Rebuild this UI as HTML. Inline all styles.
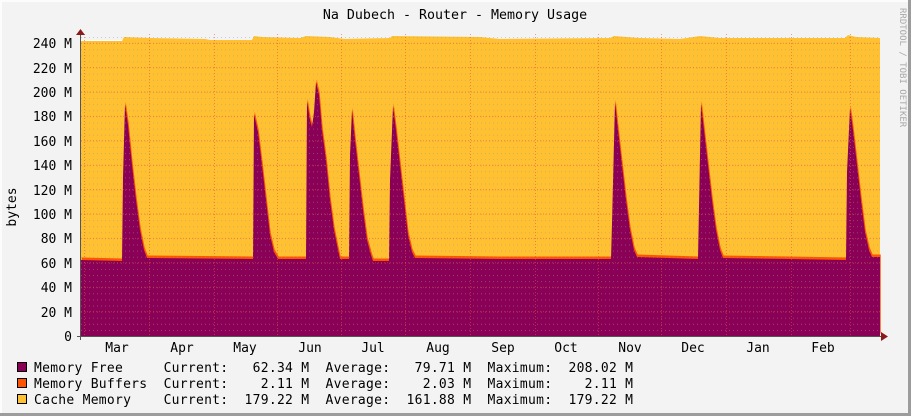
<!DOCTYPE html>
<html><head><meta charset="utf-8"><style>
html,body{margin:0;padding:0;background:#f3f3f3;}
svg{display:block;}
text{font-family:"DejaVu Sans Mono","Liberation Mono",monospace;fill:#000;}
</style></head><body>
<svg width="911" height="416" viewBox="0 0 911 416" xmlns="http://www.w3.org/2000/svg">
<defs>
<pattern id="minor" x="0" y="0" width="4" height="6.1" patternUnits="userSpaceOnUse" patternTransform="translate(81,336)">
<rect x="0" y="0" width="1" height="1" fill="rgba(150,150,150,0.45)"/>
</pattern>
</defs>
<rect x="0" y="0" width="911" height="416" fill="#f3f3f3"/>
<rect x="0" y="0" width="2" height="416" fill="#fcfcfc"/>
<rect x="0" y="0" width="911" height="2" fill="#fcfcfc"/>
<rect x="908" y="0" width="3" height="416" fill="#9c9c9c"/>
<rect x="0" y="413" width="911" height="3" fill="#9c9c9c"/>
<text x="455" y="19" text-anchor="middle" style="font-size:13.3px">Na Dubech - Router - Memory Usage</text>
<text x="0" y="0" transform="translate(900,8) rotate(90)" style="font-size:9px;fill:#a8a8a8">RRDTOOL / TOBI OETIKER</text>
<text x="0" y="0" transform="translate(16,207) rotate(-90)" text-anchor="middle" style="font-size:13px">bytes</text>
<rect x="81" y="40" width="799" height="296" fill="#fff"/>
<path d="M81,336 L81,41 L122,41 L124,37 L150,38 L205,39 L210,40 L252,40 L254,36 L262,37 L300,38 L306,36 L330,37 L345,39 L390,38 L392,36 L480,37 L500,39 L610,38 L614,36 L640,38 L680,39 L700,36 L720,38 L760,38 L800,38 L845,38 L848,35 L856,37 L880,38 L880,336 Z" fill="#ffc132"/>
<path d="M81,336 L81,260 L122,261 L123,178 L125,104 L128,125 L132,165 L136,200 L140,230 L144,250 L147,258 L150,258 L253,259 L254,114 L258,132 L262,165 L266,200 L270,235 L274,252 L278,259 L306,259 L307,101 L310,120 L312,127 L314,112 L316,82 L319,95 L322,130 L326,160 L330,200 L334,230 L338,250 L340,259 L349,259 L350,155 L352,110 L355,140 L359,175 L363,210 L367,240 L371,255 L373,261 L389,261 L390,180 L393,106 L396,130 L400,165 L404,200 L408,235 L412,252 L415,258 L500,259 L560,259 L611,259 L612,223 L615,102 L618,130 L622,165 L626,200 L630,230 L634,250 L637,257 L698,259 L699,207 L701,103 L704,130 L708,165 L712,200 L716,230 L720,250 L723,258 L790,259 L846,260 L847,172 L850,108 L853,130 L857,165 L861,200 L865,232 L869,250 L872,257 L880,257 L880,336 Z" fill="#ff5300" transform="translate(0.7,-2.5)"/>
<path d="M81,336 L81,260 L122,261 L123,178 L125,104 L128,125 L132,165 L136,200 L140,230 L144,250 L147,258 L150,258 L253,259 L254,114 L258,132 L262,165 L266,200 L270,235 L274,252 L278,259 L306,259 L307,101 L310,120 L312,127 L314,112 L316,82 L319,95 L322,130 L326,160 L330,200 L334,230 L338,250 L340,259 L349,259 L350,155 L352,110 L355,140 L359,175 L363,210 L367,240 L371,255 L373,261 L389,261 L390,180 L393,106 L396,130 L400,165 L404,200 L408,235 L412,252 L415,258 L500,259 L560,259 L611,259 L612,223 L615,102 L618,130 L622,165 L626,200 L630,230 L634,250 L637,257 L698,259 L699,207 L701,103 L704,130 L708,165 L712,200 L716,230 L720,250 L723,258 L790,259 L846,260 L847,172 L850,108 L853,130 L857,165 L861,200 L865,232 L869,250 L872,257 L880,257 L880,336 Z" fill="#8b0057"/>
<rect x="81" y="37" width="799" height="299" fill="url(#minor)"/>
<g stroke="rgba(230,80,60,0.55)" stroke-width="1" stroke-dasharray="1,2">
<line x1="81" x2="880" y1="311.6" y2="311.6"/><line x1="81" x2="880" y1="287.2" y2="287.2"/>
<line x1="81" x2="880" y1="262.8" y2="262.8"/><line x1="81" x2="880" y1="238.4" y2="238.4"/>
<line x1="81" x2="880" y1="214" y2="214"/><line x1="81" x2="880" y1="189.6" y2="189.6"/>
<line x1="81" x2="880" y1="165.2" y2="165.2"/><line x1="81" x2="880" y1="140.8" y2="140.8"/>
<line x1="81" x2="880" y1="116.4" y2="116.4"/><line x1="81" x2="880" y1="92" y2="92"/>
<line x1="81" x2="880" y1="67.6" y2="67.6"/><line x1="81" x2="880" y1="43.2" y2="43.2"/>
<line x1="84.5" x2="84.5" y1="34" y2="336"/><line x1="149.5" x2="149.5" y1="34" y2="336"/>
<line x1="214.5" x2="214.5" y1="34" y2="336"/><line x1="277.5" x2="277.5" y1="34" y2="336"/>
<line x1="341.5" x2="341.5" y1="34" y2="336"/><line x1="405.5" x2="405.5" y1="34" y2="336"/>
<line x1="470.5" x2="470.5" y1="34" y2="336"/><line x1="535.5" x2="535.5" y1="34" y2="336"/>
<line x1="598.5" x2="598.5" y1="34" y2="336"/><line x1="661.5" x2="661.5" y1="34" y2="336"/>
<line x1="726.5" x2="726.5" y1="34" y2="336"/><line x1="791.5" x2="791.5" y1="34" y2="336"/>
<line x1="850.5" x2="850.5" y1="34" y2="336"/>
</g>
<line x1="80.5" y1="34" x2="80.5" y2="340" stroke="#555"/>
<line x1="77" y1="336.5" x2="882" y2="336.5" stroke="#555"/>
<path d="M76,35 L80.5,29 L85,35 Z" fill="#8b1a1a"/>
<path d="M881,332 L888,336.5 L881,341 Z" fill="#8b1a1a"/>
<g text-anchor="end" style="font-size:13px">
<text x="72" y="341">0</text><text x="72" y="317">20 M</text><text x="72" y="292">40 M</text>
<text x="72" y="268">60 M</text><text x="72" y="243">80 M</text><text x="72" y="219">100 M</text>
<text x="72" y="195">120 M</text><text x="72" y="170">140 M</text><text x="72" y="146">160 M</text>
<text x="72" y="121">180 M</text><text x="72" y="97">200 M</text><text x="72" y="73">220 M</text>
<text x="72" y="48">240 M</text>
</g>
<g text-anchor="middle" style="font-size:13px">
<text x="117" y="352">Mar</text><text x="182" y="352">Apr</text><text x="245" y="352">May</text>
<text x="310" y="352">Jun</text><text x="373" y="352">Jul</text><text x="438" y="352">Aug</text>
<text x="503" y="352">Sep</text><text x="566" y="352">Oct</text><text x="630" y="352">Nov</text>
<text x="693" y="352">Dec</text><text x="758" y="352">Jan</text><text x="823" y="352">Feb</text>
</g>
<rect x="17.5" y="362.5" width="9" height="9" fill="#8b0057" stroke="#000"/>
<rect x="17.5" y="378.5" width="9" height="9" fill="#ff5300" stroke="#000"/>
<rect x="17.5" y="394.5" width="9" height="9" fill="#ffc132" stroke="#000"/>
<g style="font-size:13px">
<text x="34" y="372" xml:space="preserve" textLength="599" lengthAdjust="spacing">Memory Free     Current:   62.34 M  Average:   79.71 M  Maximum:  208.02 M</text>
<text x="34" y="388" xml:space="preserve" textLength="599" lengthAdjust="spacing">Memory Buffers  Current:    2.11 M  Average:    2.03 M  Maximum:    2.11 M</text>
<text x="34" y="404" xml:space="preserve" textLength="599" lengthAdjust="spacing">Cache Memory    Current:  179.22 M  Average:  161.88 M  Maximum:  179.22 M</text>
</g>
</svg>
</body></html>
